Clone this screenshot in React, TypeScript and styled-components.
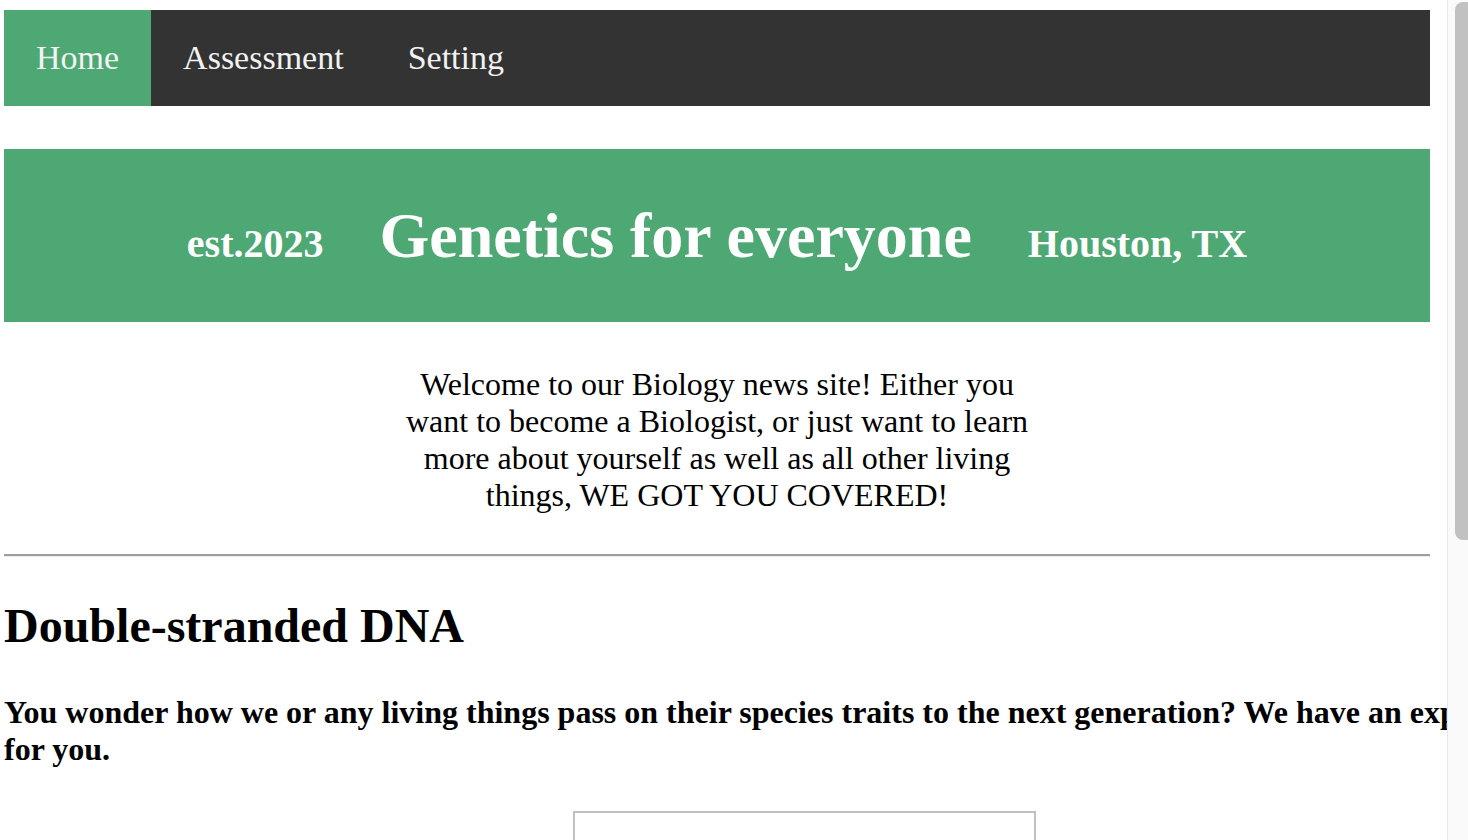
import React from "react";
import styled, { createGlobalStyle } from "styled-components";

const $green = "#4ea874";
const $navBackground = "#333333";
const $siteWidth = 1426;

const GlobalStyle = createGlobalStyle`
  html, body {
    margin: 0;
    padding: 0;
    height: 100%;
    overflow: hidden;
    background: #ffffff;
  }
  body {
    font-family: "Liberation Serif", "Times New Roman", serif;
    color: #000000;
  }
`;

const Window = styled.div`
  display: flex;
  height: 100vh;
`;

const Viewport = styled.div`
  flex: 1;
  min-width: 0;
  overflow: hidden;
`;

const ScrollTrack = styled.div`
  width: 21px;
  flex-shrink: 0;
  box-sizing: border-box;
  padding: 2px 0 0 7px;
  background: #fafafa;
  border-left: 1px solid #e8e8e8;
`;

const ScrollThumb = styled.div`
  height: 538px;
  background: #c1c1c1;
  border-radius: 8px 0 0 8px;
`;

const Page = styled.div`
  width: 1600px;
  padding: 10px 0 150px 4px;
`;

const NavBar = styled.nav`
  display: flex;
  width: ${$siteWidth}px;
  height: 96px;
  background: ${$navBackground};
`;

const NavLink = styled.a<{ active?: boolean }>`
  display: flex;
  align-items: center;
  padding: 0 32px;
  font-size: 34px;
  color: #f2f2f2;
  text-decoration: none;
  background: ${({ active }) => (active ? $green : "transparent")};
  cursor: pointer;
`;

const Banner = styled.header`
  display: flex;
  justify-content: center;
  align-items: baseline;
  gap: 56px;
  width: ${$siteWidth}px;
  margin-top: 43px;
  padding: 50px 0 0;
  box-sizing: border-box;
  height: 173px;
  background: ${$green};
  color: #ffffff;
  font-weight: bold;
`;

const BannerNote = styled.span`
  font-size: 40px;
`;

const BannerTitle = styled.h1`
  margin: 0;
  font-size: 64px;
  font-weight: bold;
`;

const IntroRow = styled.div`
  width: ${$siteWidth}px;
  margin-top: 44px;
`;

const Intro = styled.p`
  width: 640px;
  margin: 0 auto;
  font-size: 32px;
  line-height: 37px;
  text-align: center;
`;

const Rule = styled.hr`
  width: ${$siteWidth}px;
  margin: 40px 0 0;
  border: none;
  border-top: 2px solid #9e9e9e;
  border-bottom: 1px solid #ececec;
`;

const Article = styled.section`
  width: 1600px;
`;

const ArticleTitle = styled.h2`
  margin: 41px 0 0;
  font-size: 48px;
  line-height: 55px;
  font-weight: bold;
`;

const Lead = styled.p`
  margin: 41px 0 0;
  font-size: 32px;
  line-height: 37px;
  font-weight: bold;
`;

const Frame = styled.div`
  width: 463px;
  height: 300px;
  margin: 43px auto 0;
  box-sizing: border-box;
  border: 2px solid #c0c0c0;
`;

const navItems = ["Home", "Assessment", "Setting"];

export default function App() {
  return (
    <>
      <GlobalStyle />
      <Window>
        <Viewport>
          <Page>
            <NavBar>
              {navItems.map((item, i) => (
                <NavLink key={item} active={i === 0}>
                  {item}
                </NavLink>
              ))}
            </NavBar>
            <Banner>
              <BannerNote>est.2023</BannerNote>
              <BannerTitle>Genetics for everyone</BannerTitle>
              <BannerNote>Houston, TX</BannerNote>
            </Banner>
            <IntroRow>
              <Intro>
                Welcome to our Biology news site! Either you want to become a
                Biologist, or just want to learn more about yourself as well as
                all other living things, WE GOT YOU COVERED!
              </Intro>
            </IntroRow>
            <Rule />
            <Article>
              <ArticleTitle>Double-stranded DNA</ArticleTitle>
              <Lead>
                You wonder how we or any living things pass on their species
                traits to the next generation? We have an explanation for you.
              </Lead>
              <Frame />
            </Article>
          </Page>
        </Viewport>
        <ScrollTrack>
          <ScrollThumb />
        </ScrollTrack>
      </Window>
    </>
  );
}
